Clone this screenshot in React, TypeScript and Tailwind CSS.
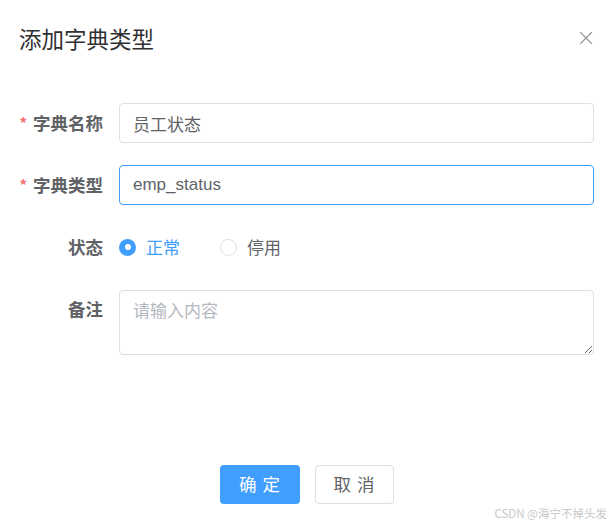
import { X } from "lucide-react";

const font = { fontFamily: '"Noto Sans CJK SC", "Noto Sans", sans-serif' };

function Label({ text, required }: { text: string; required?: boolean }) {
  return (
    <div className="flex h-10 items-center justify-end pr-[16px] text-[17.5px] font-bold text-[#606266]">
      {required && <span className="mr-[6px] text-[15px] text-[#f56c6c]">*</span>}
      {text}
    </div>
  );
}

export default function App() {
  return (
    <div className="relative h-[526px] w-[613px] overflow-hidden bg-white" style={font}>
      {/* header */}
      <div className="flex items-center justify-between pl-[19px] pr-[16px] pt-[24px]">
        <span className="text-[22.5px] leading-[28px] text-[#303133]">添加字典类型</span>
        <X className="size-[22px] text-[#909399]" strokeWidth={1.2} />
      </div>

      {/* form */}
      <div className="mt-[51px] grid grid-cols-[119px_475px] gap-y-[22px]">
        <Label text="字典名称" required />
        <input
          readOnly
          value="员工状态"
          className="h-10 rounded-[4px] border border-[#dcdfe6] px-[13px] text-[17px] text-[#606266] outline-none"
        />

        <Label text="字典类型" required />
        <input
          readOnly
          value="emp_status"
          className="h-10 rounded-[4px] border border-[#409eff] px-[13px] text-[17px] text-[#606266] outline-none"
          style={{ fontFamily: '"Liberation Sans", "Noto Sans CJK SC", sans-serif' }}
        />

        <Label text="状态" />
        <div className="flex h-10 items-center text-[17px]">
          <span className="flex items-center text-[#409eff]">
            <span className="grid size-[17px] place-items-center rounded-full bg-[#409eff]">
              <span className="size-[6px] rounded-full bg-white" />
            </span>
            <span className="ml-[10px]">正常</span>
          </span>
          <span className="ml-[40px] flex items-center text-[#606266]">
            <span className="size-[17px] rounded-full border border-[#dcdfe6] bg-white" />
            <span className="ml-[10px]">停用</span>
          </span>
        </div>

        <div className="self-start">
          <Label text="备注" />
        </div>
        <textarea
          readOnly
          placeholder="请输入内容"
          className="mt-[1px] block h-[65px] resize-y rounded-[4px] border border-[#dcdfe6] px-[13px] py-[5px] text-[17px] leading-[28px] text-[#606266] outline-none placeholder:text-[#b4b8bf]"
        />
      </div>

      {/* footer */}
      <div className="mt-[110px] flex justify-center gap-[15px]">
        <button className="h-[39px] w-[80px] rounded-[4px] bg-[#409eff] pl-[6px] text-[17.5px] tracking-[6px] text-white">
          确定
        </button>
        <button className="h-[39px] w-[79px] rounded-[4px] border border-[#dcdfe6] bg-white pl-[6px] text-[17.5px] tracking-[6px] text-[#606266]">
          取消
        </button>
      </div>

      <span className="absolute bottom-[4px] right-[6px] text-[11.5px] text-[#c8c8c8]">CSDN @海宁不掉头发</span>
    </div>
  );
}
